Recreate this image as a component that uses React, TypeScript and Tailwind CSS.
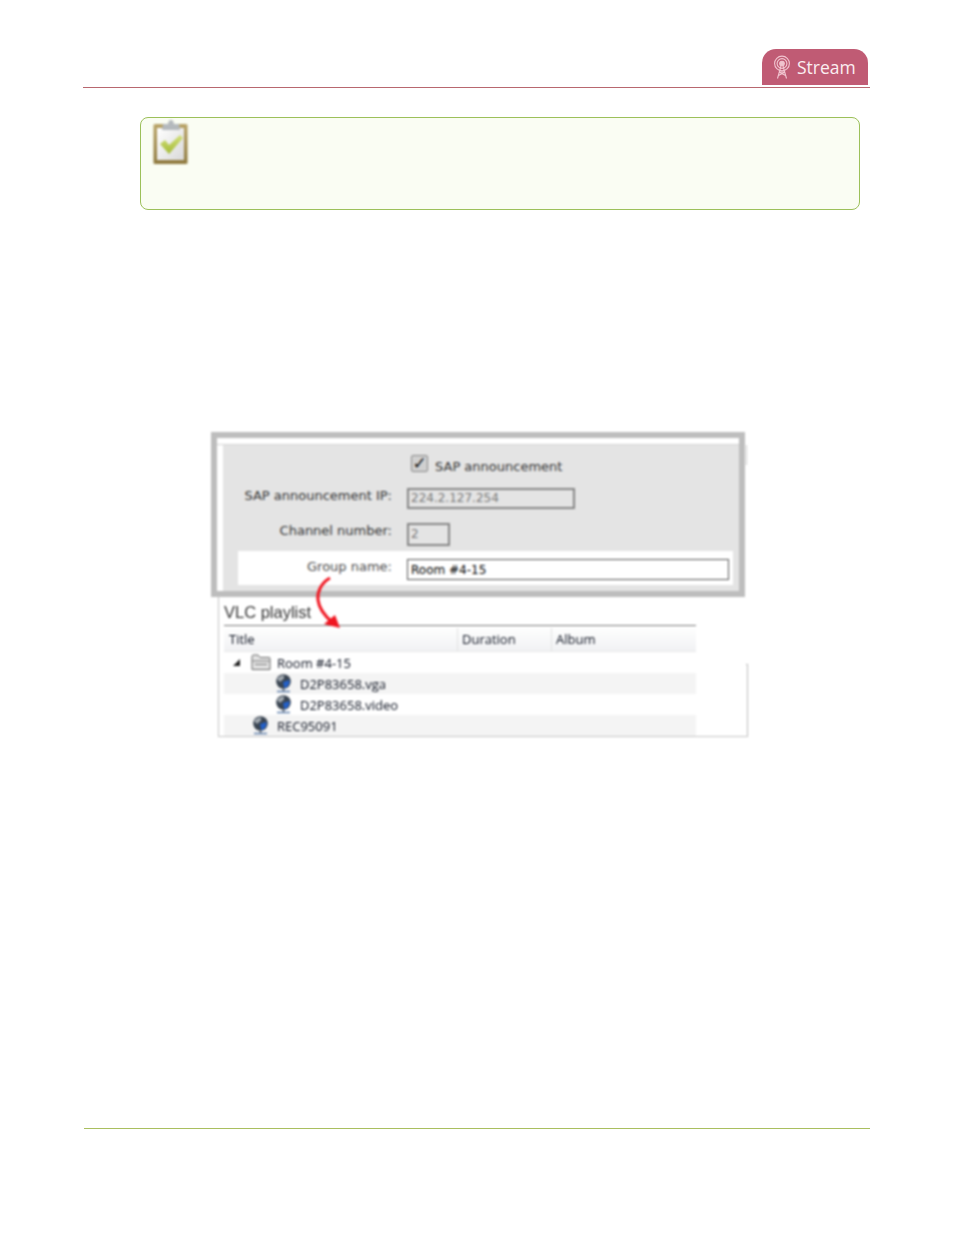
import React from 'react';

function TowerIcon() {
  return (
    <svg width="18" height="24" viewBox="0 0 18 24" fill="none" stroke="#f0c4cf" strokeWidth="1.1" className="blur-[0.3px]">
      <circle cx="9" cy="8.500" r="7.400" />
      <circle cx="9" cy="8.500" r="4.900" />
      <circle cx="9" cy="8.500" r="2.300" fill="#f0c4cf" />
      <path d="M8 11 L4.500 23.500 M10 11 L13.500 23.500 M6.500 17 H11.500 M5.500 20.500 L12 17 M12.500 20.500 L6 17" />
    </svg>
  );
}

function ClipboardIcon() {
  return (
    <svg width="36" height="46" viewBox="0 0 36 46">
      <defs>
        <linearGradient id="board" x1="0" y1="0" x2="0" y2="1">
          <stop offset="0" stopColor="#b9a468" />
          <stop offset="1" stopColor="#8f7a3f" />
        </linearGradient>
        <linearGradient id="paper" x1="0" y1="0" x2="1" y2="1">
          <stop offset="0" stopColor="#ffffff" />
          <stop offset="1" stopColor="#d9d9d9" />
        </linearGradient>
        <linearGradient id="check" x1="0" y1="0" x2="0" y2="1">
          <stop offset="0" stopColor="#d3e07a" />
          <stop offset="1" stopColor="#a4bb38" />
        </linearGradient>
      </defs>
      <rect x="0.500" y="5" width="34" height="40" rx="1.500" fill="url(#board)" />
      <rect x="4" y="9" width="27" height="32" fill="url(#paper)" />
      <path d="M10 5 H15 Q15.500 1 18 1 Q20.500 1 21 5 H26 L27 11 H9 Z" fill="#b4b9bd" />
      <path d="M7 25 L12 21 L16 26 L27 16 L30 19 L16 35 Z" fill="url(#check)" />
    </svg>
  );
}

function GlobeIcon() {
  return (
    <svg width="17" height="19" viewBox="0 0 17 19">
      <circle cx="8.500" cy="7.500" r="7.300" fill="#3a4552" />
      <path d="M8 8 L14.500 6 Q15 12 9.500 14.500 Z" fill="#2460c8" />
      <path d="M2 5 Q5 1 9 1.500 L9 4.500 L5 8 Z" fill="#a2a9b0" />
      <path d="M2 17.500 H15" stroke="#5f7fab" strokeWidth="1.500" />
      <path d="M8.500 14 V17" stroke="#4c5764" strokeWidth="1.500" />
    </svg>
  );
}

function FolderIcon() {
  return (
    <svg width="20" height="17" viewBox="0 0 20 17" fill="none">
      <path d="M1 15.500 V2.500 Q1 1 2.500 1 H7 L9 3.500 H18 Q19 3.500 19 4.500 V15.500 Z" fill="#e4e4e4" stroke="#666" />
      <path d="M1.500 7 H18.500 M4 10.500 H16" stroke="#777" />
    </svg>
  );
}

function ArrowOverlay() {
  return (
    <svg className="absolute left-[101px] top-[142px]" width="32" height="58" viewBox="0 0 32 58" fill="none">
      <path d="M18 4 C9 9 5 18 6 26 C7 34 13 42 20 48" stroke="#f01520" strokeWidth="3" />
      <path d="M28 54 L12 50 L23 41 Z" fill="#f01520" />
    </svg>
  );
}

const rows = [
  { name: 'Room #4-15', indent: 'pl-[9px]', shade: false, icon: 'folder' },
  { name: 'D2P83658.vga', indent: 'pl-[51px]', shade: true, icon: 'globe' },
  { name: 'D2P83658.video', indent: 'pl-[51px]', shade: false, icon: 'globe' },
  { name: 'REC95091', indent: 'pl-[28px]', shade: true, icon: 'globe' },
];

export default function App() {
  return (
    <div className="w-[954px] h-[1235px] bg-white pl-[83px] pr-[84px] flex flex-col font-['Liberation_Sans',sans-serif]">
      {/* page header */}
      <div className="h-[88px] shrink-0 flex justify-end items-end border-b border-[#b8676f] pr-[2px] pb-[2px]">
        <div className="w-[106px] h-[36px] bg-[#c05b74] rounded-t-[14px] flex items-center pl-[11px]">
          <TowerIcon />
          <span className="ml-[6px] mt-[2px] font-['Open_Sans',sans-serif] text-[17.500px] text-[#fbeef1] leading-none">Stream</span>
        </div>
      </div>

      {/* note box */}
      <div className="ml-[57px] mt-[29px] w-[720px] h-[93px] shrink-0 rounded-[8px] border border-[#9cc05a] bg-[#fafdf3] pl-[12px] pt-[1px]">
        <div className="blur-[0.8px]">
          <ClipboardIcon />
        </div>
      </div>

      {/* figure */}
      <div className="relative ml-[128px] mt-[222px] w-[537px] h-[305px] shrink-0 blur-[0.8px]">
        <div className="w-[534px] h-[165px] border-[6px] border-[#bdbdbd] bg-white flex flex-col">
          <div className="h-[7px] shrink-0 border-b border-[#d4d4d4]" />
          <div className="flex-1 ml-[6px] bg-[#e4e4e4] flex flex-col text-[13px] font-['DejaVu_Sans',sans-serif] text-[#333]">
            <div className="h-[34px] shrink-0 flex items-end pl-[188px] pb-[7px]">
              <span className="w-[17px] h-[17px] rounded-[2px] border border-[#888] bg-[#d0d0d0] text-[#111] text-[17px] font-bold leading-none flex items-center justify-center mr-[7px]">✓</span>
              <span className="mb-[-2px] leading-[15px]">SAP announcement</span>
            </div>
            <div className="h-[38px] shrink-0 flex items-center">
              <span className="w-[169px] mb-[4px] text-right">SAP announcement IP:</span>
              <span className="ml-[15px] w-[168px] h-[21px] border-2 border-[#858585] text-[12px] text-[#777] pl-[2px] leading-[17px]">224.2.127.254</span>
            </div>
            <div className="h-[34px] shrink-0 flex items-center">
              <span className="w-[169px] mb-[6px] text-right">Channel number:</span>
              <span className="ml-[15px] w-[43px] h-[23px] border-2 border-[#858585] text-[12px] text-[#777] pl-[2px] leading-[19px]">2</span>
            </div>
            <div className="ml-[15px] mr-[6px] h-[34px] shrink-0 bg-white flex items-center">
              <span className="w-[154px] mb-[2px] text-right text-[#4a4a4a]">Group name:</span>
              <span className="ml-[15px] mt-[2px] w-[322px] h-[21px] border border-[#555] text-[12px] text-black pl-[3px] leading-[20px]">Room #4-15</span>
            </div>
          </div>
        </div>

        <div className="ml-[7px] h-[140px] border-l border-[#c4c4c4] border-b flex flex-col relative">
          <div className="h-[28px] pl-[5px] pt-[6px] text-[16.500px] leading-[18px] text-[#333]">VLC playlist</div>
          <div className="ml-[5px] w-[472px] font-['Open_Sans',sans-serif] text-[13px] text-[#0c1220]">
            <div className="h-[27px] pt-[2px] border-t border-[#777] bg-gradient-to-b from-white to-[#f1f2f4] border-b border-b-[#e8e8e8] flex items-center">
              <span className="w-[233px] h-full pl-[5px] flex items-center">Title</span>
              <span className="w-[94px] h-full pl-[4px] border-l border-[#e2e2e2] flex items-center">Duration</span>
              <span className="flex-1 h-full pl-[4px] border-l border-[#e2e2e2] flex items-center">Album</span>
            </div>
            {rows.map((row) => (
              <div
                key={row.name}
                className={`h-[21px] flex items-center ${row.indent} ${row.shade ? 'bg-[#f4f4f4]' : 'bg-white'}`}
              >
                {row.icon === 'folder' ? (
                  <>
                    <span className="w-0 h-0 border-l-[7px] border-l-transparent border-b-[7px] border-b-[#222] mr-[11px]" />
                    <FolderIcon />
                    <span className="ml-[6px] mt-[2px]">{row.name}</span>
                  </>
                ) : (
                  <>
                    <GlobeIcon />
                    <span className="ml-[8px] mt-[2px]">{row.name}</span>
                  </>
                )}
              </div>
            ))}
          </div>
          <div className="absolute right-0 top-[67px] bottom-0 w-[2px] border-r border-t border-[#bbb]" />
        </div>
        <div className="absolute left-[535px] top-[13px] h-[20px] border-l border-[#ccc]" />
        <ArrowOverlay />
      </div>

      <div className="flex-1" />

      {/* page footer */}
      <div className="h-[107px] ml-[1px] shrink-0 border-t border-[#a9bf5f]" />
    </div>
  );
}
